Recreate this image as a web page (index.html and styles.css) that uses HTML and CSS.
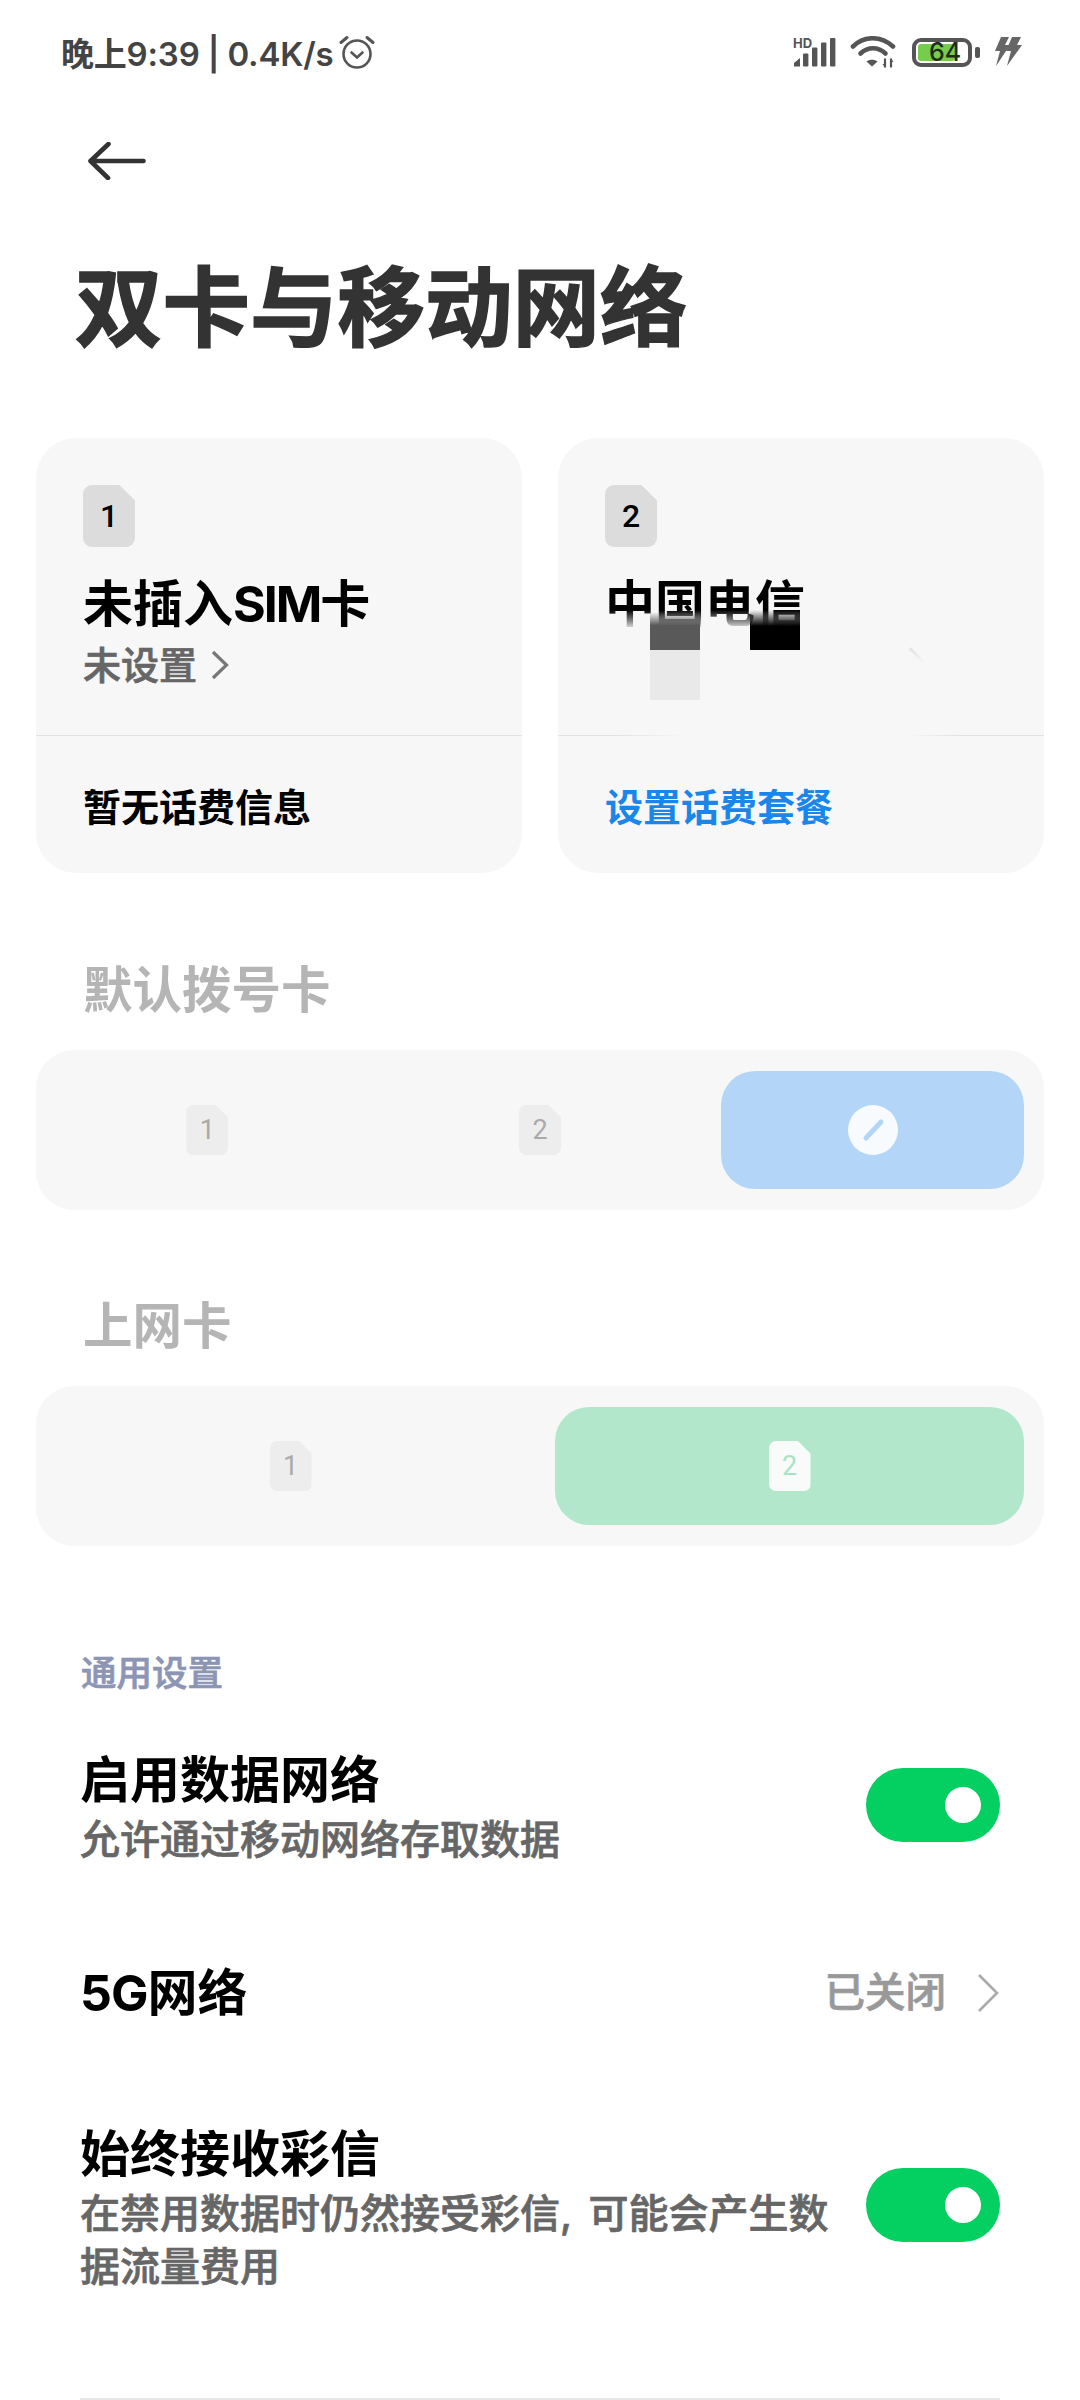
FILE: index.html
```html
<!DOCTYPE html>
<html lang="zh-CN">
<head>
    <meta charset="UTF-8">
    <title>双卡与移动网络</title>
    <link rel="stylesheet" href="styles.css">
</head>
<body>

    <div class="status">
        <div class="status-left">
            <span>晚上9:39 | 0.4K/s</span>
            <svg class="alarm" viewBox="0 0 36 34" fill="none" stroke="#555" stroke-linecap="round">
                <circle cx="18" cy="19" r="13.5" stroke-width="2.6"/>
                <path d="M12.5 17.5 18 22.5l5.5-5" stroke-width="2.6"/>
                <path d="M2 7.5 8 2.5M34 7.5 28 2.5" stroke-width="3"/>
            </svg>
        </div>
        <div class="status-right">
            <svg class="signal" viewBox="0 0 42 30" fill="#555">
                <text x="-1" y="10.5" class="hd">HD</text>
                <path d="M0 29.5v-3.5l6-5v8.5z"/>
                <rect x="9" y="16.5" width="5.4" height="13" rx="1"/>
                <rect x="18" y="10.5" width="5.4" height="19" rx="1"/>
                <rect x="27" y="5.5" width="5.4" height="24" rx="1"/>
                <rect x="36" y="1" width="5.4" height="28.5" rx="1"/>
            </svg>
            <svg class="wifi" viewBox="0 0 46 32" fill="none" stroke="#555" stroke-width="4.6" stroke-linecap="round">
                <path d="M3 10.5C14-.5 31-.5 43 10.5"/>
                <path d="M10.5 17.5c7.5-7 17.5-7 25 0"/>
                <path d="M22 30.5 16.5 25.5c3-2.5 8-2.5 11 0z" fill="#555" stroke="none"/>
                <path d="M35 22.5v9M41 22.5v9" stroke-width="2.2" stroke-linecap="butt"/>
                <path d="M32.5 28l2.5 3.5 0-3.5zM43.5 26l-2.5-3.5 0 3.5z" fill="#555" stroke="none"/>
            </svg>
            <div class="battery">
                <div class="battery-body">
                    <div class="battery-fill"></div>
                    <span class="battery-num">64</span>
                </div>
                <div class="battery-nub"></div>
            </div>
            <svg class="bolt" viewBox="0 0 28 30" fill="#666">
                <path d="M7 0h8l-4 8h5L2 29l4-15H1z"/>
                <path d="M18 0h9l-4 8h5L13 29l4-15h-5z"/>
            </svg>
        </div>
    </div>

    <svg class="back" viewBox="0 0 58 38" fill="none" stroke="#333" stroke-width="4.6" stroke-linecap="round" stroke-linejoin="round">
        <path d="M20.5 2 2.5 19 20 36M2.5 19H55.5"/>
    </svg>

    <h1 class="page-title">双卡与移动网络</h1>

    <div class="cards">
        <div class="card">
            <div class="card-top">
                <div class="sim sim-big">1</div>
                <div class="card-title">未插入<span class="tight">SIM</span>卡</div>
                <div class="card-sub">
                    未设置
                    <svg class="chevron-sm" viewBox="0 0 18 30" fill="none" stroke="#777" stroke-width="3.2">
                        <path d="M2 2 15.5 15 2 28"/>
                    </svg>
                </div>
            </div>
            <div class="card-bottom">暂无话费信息</div>
        </div>

        <div class="card">
            <div class="card-top">
                <div class="sim sim-big">2</div>
                <div class="card-title">中国电信</div>
            </div>
            <div class="card-bottom link">设置话费套餐</div>
            <!-- the number under the operator name was blotted out in the capture -->
            <div class="blot">
                <div class="blot-fade"></div>
                <div class="blot-cell blot-grey"></div>
                <div class="blot-cell blot-black"></div>
                <div class="blot-cell blot-light"></div>
                <div class="blot-tick"></div>
                <div class="blot-line"></div>
            </div>
        </div>
    </div>

    <h2 class="picker-label label-first">默认拨号卡</h2>
    <div class="picker picker-three">
        <div class="choice"><div class="sim sim-small">1</div></div>
        <div class="choice"><div class="sim sim-small">2</div></div>
        <div class="choice choice-blue">
            <div class="ask">
                <svg viewBox="0 0 50 50" stroke="#b3d6f8" stroke-width="5" stroke-linecap="round">
                    <path d="M18 33 33 17"/>
                </svg>
            </div>
        </div>
    </div>

    <h2 class="picker-label label-second">上网卡</h2>
    <div class="picker picker-two">
        <div class="choice"><div class="sim sim-small">1</div></div>
        <div class="choice choice-green"><div class="sim sim-small sim-on">2</div></div>
    </div>

    <div class="group-title">通用设置</div>

    <div class="row row-data">
        <div class="row-text">
            <div class="row-title">启用数据网络</div>
            <div class="row-sub">允许通过移动网络存取数据</div>
        </div>
        <div class="toggle"><div class="knob"></div></div>
    </div>

    <div class="row row-5g">
        <div class="row-title"><span class="tight-5g">5G</span>网络</div>
        <div class="row-value">
            已关闭
            <svg class="chevron" viewBox="0 0 22 40" fill="none" stroke="#aaa" stroke-width="2.6">
                <path d="M2 2 20 20 2 38"/>
            </svg>
        </div>
    </div>

    <div class="row row-mms">
        <div class="row-text">
            <div class="row-title">始终接收彩信</div>
            <div class="row-sub">在禁用数据时仍然接受彩信, 可能会产生数据流量费用</div>
        </div>
        <div class="toggle"><div class="knob"></div></div>
    </div>

    <div class="bottom-line"></div>

</body>
</html>
```

FILE: styles.css
```css
* {
    box-sizing: border-box;
}

body {
    margin: 0;
    width: 1080px;
    height: 2400px;
    overflow: hidden;
    background-color: #fff;
    font-family: Inter, "Noto Sans CJK SC", sans-serif;
    color: #000;
}

/* status bar */
.status {
    height: 104px;
    padding: 0 58px 0 61px;
    display: flex;
    align-items: center;
    justify-content: space-between;
}

.status-left {
    display: flex;
    align-items: center;
    gap: 6px;
    font-size: 33px;
    font-weight: 600;
    letter-spacing: -0.2px;
    color: #444;
}

.alarm {
    width: 36px;
    height: 34px;
}

.status-right {
    display: flex;
    align-items: center;
}

.signal {
    width: 42px;
    height: 30px;
    margin-right: 14px;
    overflow: visible;
}

.hd {
    font-size: 13px;
    font-weight: 700;
}

.wifi {
    width: 46px;
    height: 32px;
    margin-right: 16px;
}

.battery {
    display: flex;
    align-items: center;
    gap: 3px;
    margin-right: 14px;
}

.battery-body {
    position: relative;
    width: 60px;
    height: 29px;
    border: 4px solid #555;
    border-radius: 9px;
}

.battery-fill {
    position: absolute;
    left: 2px;
    top: 2px;
    bottom: 2px;
    width: 37px;
    border-radius: 3px;
    background-color: #76cc4c;
}

.battery-num {
    position: absolute;
    left: 13px;
    top: -5px;
    font-size: 25px;
    line-height: 30px;
    font-weight: 500;
    color: #1f2a1c;
}

.battery-nub {
    width: 5px;
    height: 11px;
    border-radius: 2px;
    background-color: #555;
}

.bolt {
    width: 28px;
    height: 30px;
}

/* header */
.back {
    display: block;
    width: 58px;
    height: 38px;
    margin: 38px 0 0 88px;
}

.page-title {
    margin: 84px 0 0 75px;
    font-size: 87.5px;
    line-height: 88px;
    font-weight: 700;
    color: #333;
    -webkit-text-stroke: 1.5px #333;
}

/* sim cards */
.cards {
    margin-top: 86px;
    padding: 0 36px;
    display: grid;
    grid-template-columns: 486px 486px;
    gap: 36px;
}

.card {
    position: relative;
    height: 435px;
    border-radius: 40px;
    background-color: #f7f7f7;
    overflow: hidden;
}

.card-top {
    height: 298px;
    padding: 47px 0 0 47px;
    border-bottom: 1px solid #e2e2e2;
}

.card-title {
    margin-top: 29px;
    font-size: 50px;
    line-height: 56px;
    font-weight: 700;
}

.tight {
    letter-spacing: -2px;
}

.card-sub {
    margin-top: 9px;
    display: flex;
    align-items: center;
    gap: 14px;
    font-size: 38px;
    line-height: 48px;
    font-weight: 500;
    color: #666;
    -webkit-text-stroke: 0.7px #666;
}

.chevron-sm {
    width: 18px;
    height: 30px;
}

.card-bottom {
    padding: 48px 0 0 47px;
    font-size: 38px;
    line-height: 46px;
    font-weight: 700;
}

.link {
    color: #1a86ea;
}

.sim {
    display: flex;
    align-items: center;
    justify-content: center;
    font-family: Roboto, sans-serif;
    font-weight: 500;
    clip-path: polygon(0 0, 70% 0, 100% 25%, 100% 100%, 0 100%);
}

.sim-big {
    width: 52px;
    height: 62px;
    border-radius: 9px;
    background-color: #dcdcdc;
    font-size: 32px;
}

.sim-small {
    width: 42px;
    height: 50px;
    border-radius: 7px;
    background-color: #ededed;
    font-size: 27px;
    font-weight: 400;
    color: #aaa;
}

.sim-on {
    background-color: #f8fbf9;
    color: #a9e3c5;
}

/* blotted part of the second card */
.blot {
    position: absolute;
    inset: 0;
}

.blot-fade {
    position: absolute;
    left: 40px;
    top: 172px;
    width: 240px;
    height: 20px;
    background: linear-gradient(rgba(247, 247, 247, 0), #f7f7f7);
}

.blot-cell {
    position: absolute;
    left: 92px;
    width: 50px;
}

.blot-grey {
    top: 174px;
    height: 38px;
    background: linear-gradient(rgba(89, 89, 89, 0), #595959 35%);
}

.blot-black {
    left: 192px;
    top: 172px;
    height: 40px;
    background: linear-gradient(rgba(0, 0, 0, 0), #000 40%);
}

.blot-light {
    top: 212px;
    height: 50px;
    background-color: #e9e9e9;
}

.blot-tick {
    position: absolute;
    left: 358px;
    top: 207px;
    width: 3px;
    height: 22px;
    background: linear-gradient(#e2e2e2, #f7f7f7);
    transform: rotate(-45deg);
}

.blot-line {
    position: absolute;
    left: 60px;
    top: 295px;
    width: 340px;
    height: 5px;
    background: linear-gradient(90deg, rgba(247, 247, 247, 0), #f7f7f7 20%, #f7f7f7 85%, rgba(247, 247, 247, 0));
}

/* default card pickers */
.picker-label {
    margin: 0 0 0 83px;
    font-size: 49.5px;
    line-height: 56px;
    font-weight: 700;
    color: #b5b5b5;
}

.label-first {
    margin-top: 89px;
}

.label-second {
    margin-top: 88px;
}

.picker {
    margin: 32px 36px 0;
    padding: 21px 20px;
    height: 160px;
    border-radius: 38px;
    background-color: #f7f7f7;
    display: grid;
    gap: 30px;
}

.picker-three {
    grid-template-columns: repeat(3, 1fr);
}

.picker-two {
    grid-template-columns: repeat(2, 1fr);
}

.choice {
    display: flex;
    align-items: center;
    justify-content: center;
    border-radius: 34px;
}

.choice-blue {
    background-color: #b3d6f8;
}

.choice-green {
    background-color: #b2e7cc;
}

.ask {
    width: 50px;
    height: 50px;
    border-radius: 50%;
    background-color: #f8fbfe;
}

.ask svg {
    display: block;
}

/* settings list */
.group-title {
    margin: 105px 0 0 81px;
    font-size: 35.5px;
    line-height: 46px;
    font-weight: 500;
    color: #8d95b5;
    -webkit-text-stroke: 0.7px #8d95b5;
}

.row {
    margin: 0 80px 0 80px;
    display: flex;
    align-items: center;
    justify-content: space-between;
}

.row-data {
    margin-top: 54px;
}

.row-5g {
    margin-top: 98px;
}

.row-mms {
    margin-top: 103px;
}

.row-text {
    width: 770px;
}

.row-title {
    font-size: 50px;
    line-height: 58px;
    font-weight: 700;
}

.tight-5g {
    letter-spacing: -1px;
}

.row-sub {
    margin-top: 4px;
    font-size: 40px;
    line-height: 53px;
    font-weight: 500;
    word-spacing: 6px;
    color: #666;
    -webkit-text-stroke: 0.7px #666;
}

.row-value {
    flex: none;
    display: flex;
    align-items: center;
    gap: 31px;
    font-size: 40.5px;
    line-height: 58px;
    font-weight: 500;
    color: #999;
    -webkit-text-stroke: 0.7px #999;
}

.chevron {
    width: 22px;
    height: 40px;
    margin-right: 1px;
}

.toggle {
    flex: none;
    width: 134px;
    height: 74px;
    margin-top: -8px;
    padding: 19px;
    border-radius: 37px;
    background-color: #03d060;
    display: flex;
    justify-content: flex-end;
}

.knob {
    width: 36px;
    height: 36px;
    border-radius: 50%;
    background-color: #fff;
}

.bottom-line {
    position: absolute;
    top: 2398px;
    left: 80px;
    right: 80px;
    height: 2px;
    background-color: #e5e5e5;
}
```
